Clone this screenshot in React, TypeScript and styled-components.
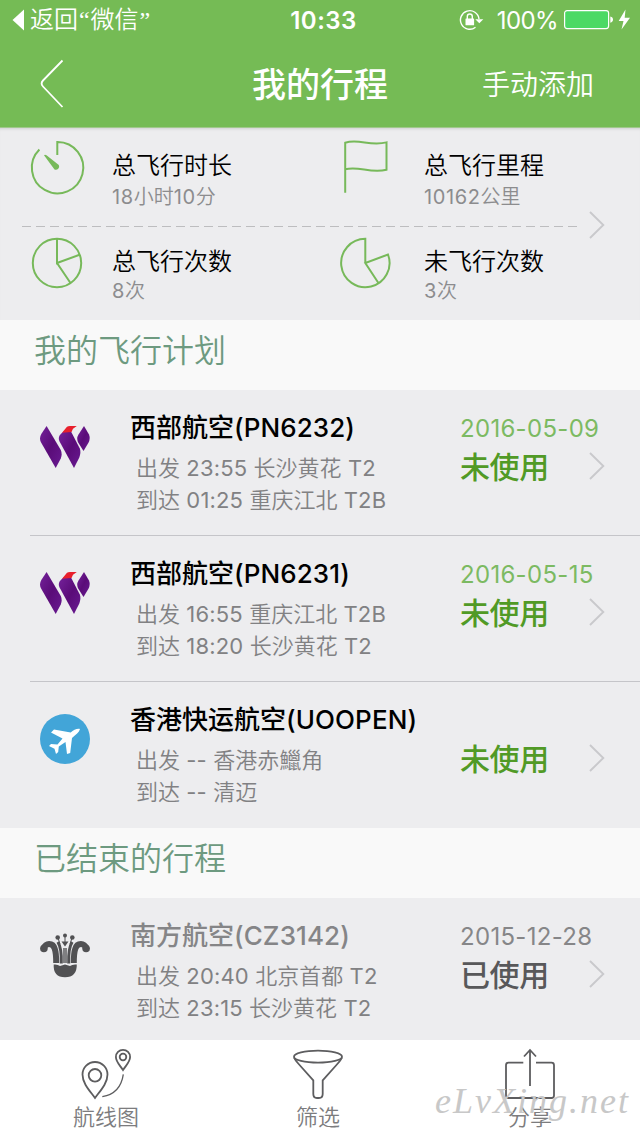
import React from 'react';
import styled, { createGlobalStyle } from 'styled-components';

const GlobalStyle = createGlobalStyle`
  *, *::before, *::after { box-sizing: border-box; }
  body {
    margin: 0;
    background: #ededef;
    font-family: Inter, "Noto Sans CJK SC", sans-serif;
    font-weight: 350;
  }
`;

const Screen = styled.div`
  position: relative;
  display: flex;
  flex-direction: column;
  width: 640px;
  height: 1136px;
  overflow: hidden;
  background: #ededef;
`;

/* ---------- text helpers ---------- */

const Latin = styled.span<{ $gap: number; $weight: number }>`
  font-weight: ${(p) => p.$weight};
  letter-spacing: ${(p) => p.$gap}px;
`;

function Mixed({ text, gap = 0, weight = 400 }: { text: string; gap?: number; weight?: number }) {
  const parts = text.match(/[\x00-\x7f]+|[^\x00-\x7f]+/g) ?? [];
  return (
    <>
      {parts.map((part, i) =>
        part.charCodeAt(0) < 128 ? (
          <Latin key={i} $gap={gap} $weight={weight}>{part}</Latin>
        ) : (
          <span key={i}>{part}</span>
        ),
      )}
    </>
  );
}

/* ---------- header ---------- */

const Header = styled.header`
  flex: none;
  height: 128px;
  background: #75bb55;
  color: #fff;
  border-bottom: 1px solid #a0c88c;
`;

const StatusBar = styled.div`
  display: grid;
  grid-template-columns: 1fr auto 1fr;
  align-items: center;
  height: 40px;
  padding: 0 8px 0 12px;
`;

const BackToApp = styled.div`
  display: flex;
  align-items: center;
  gap: 6px;
  font-size: 24px;
  line-height: 40px;
`;

const Quote = styled.span`
  display: inline-block;
  width: 12.5px;
  font-family: "Liberation Serif", serif;
  line-height: 30px;
  text-align: center;
`;

const Clock = styled.div`
  font-size: 24px;
  font-weight: 600;
  letter-spacing: 0.5px;
  padding: 1px 0 0 3px;
`;

const StatusIcons = styled.div`
  display: flex;
  align-items: center;
  justify-content: flex-end;
  font-size: 24px;
  font-weight: 400;
`;

const Percent = styled.span`
  margin: 1px 6px 0 13px;
  letter-spacing: -0.6px;
`;

const NavBar = styled.div`
  display: grid;
  grid-template-columns: 1fr auto 1fr;
  align-items: center;
  height: 88px;
  padding: 0 39px;
`;

const NavTitle = styled.h1`
  margin: 0;
  padding-top: 2px;
  font-size: 34px;
  line-height: 48px;
  font-weight: 500;
`;

const NavAction = styled.div`
  justify-self: end;
  margin-right: 7px;
  padding-top: 2px;
  font-size: 28px;
  line-height: 48px;
`;

/* ---------- statistics ---------- */

const Stats = styled.section`
  display: flex;
  flex: none;
  align-items: center;
  height: 192px;
  box-shadow: inset 0 3px 3px -2px #cfcfd1;
`;

const StatRows = styled.div`
  width: 578px;
  height: 192px;
`;

const StatRow = styled.div<{ $height: number; $top: number }>`
  display: grid;
  grid-template-columns: 312px 266px;
  height: ${(p) => p.$height}px;
  padding-top: ${(p) => p.$top}px;
`;

const StatCell = styled.div`
  display: grid;
  grid-template-columns: 84px 1fr;
  padding-left: 28px;
  align-items: start;
`;

const StatTitle = styled.div`
  font-size: 24px;
  line-height: 30px;
  color: #000;
`;

const StatValue = styled.div<{ $gap: number }>`
  margin-top: ${(p) => p.$gap}px;
  font-size: 20px;
  line-height: 28px;
  color: #8c8c8e;
`;

const Dashes = styled.div`
  height: 1px;
  margin-left: 22px;
  background: repeating-linear-gradient(90deg, #bdbdbf 0 9px, transparent 9px 14px);
`;

const ChevronSlot = styled.div<{ $top?: number }>`
  padding: ${(p) => p.$top ?? 2}px 0 0 11px;
  line-height: 0;
`;

/* ---------- flights ---------- */

const SectionTitle = styled.h2`
  flex: none;
  height: 70px;
  margin: 0;
  padding: 6px 0 0 34px;
  background: #f9f9f9;
  color: #6d9a80;
  font-size: 32px;
  line-height: 50px;
  font-weight: 350;
`;

const Flight = styled.article<{ $height: number; $divided: boolean }>`
  position: relative;
  display: grid;
  flex: none;
  grid-template-columns: 130px 330px 118px 1fr;
  height: ${(p) => p.$height}px;
  padding-top: 22px;
  &::after {
    content: "";
    display: ${(p) => (p.$divided ? 'block' : 'none')};
    position: absolute;
    left: 30px;
    right: 0;
    bottom: 0;
    height: 1px;
    background: #c5c5c9;
  }
`;

const Logo = styled.div`
  padding: 10px 0 0 40px;
  line-height: 0;
`;

const Name = styled.div<{ $past: boolean }>`
  margin-bottom: 8px;
  font-size: 26px;
  line-height: 32px;
  font-weight: 500;
  white-space: nowrap;
  color: ${(p) => (p.$past ? '#858587' : '#000')};
`;

const Leg = styled.div`
  padding-left: 6px;
  font-size: 22px;
  line-height: 32px;
  white-space: nowrap;
  color: #818183;
`;

const FlightDate = styled.div<{ $past: boolean }>`
  height: 33px;
  padding-top: 1px;
  margin-bottom: 2px;
  font-size: 24px;
  line-height: 32px;
  font-weight: 400;
  letter-spacing: 0.3px;
  white-space: nowrap;
  color: ${(p) => (p.$past ? '#868688' : '#7cba62')};
`;

const State = styled.div<{ $past: boolean }>`
  font-size: 30px;
  line-height: 40px;
  font-weight: 500;
  letter-spacing: -0.4px;
  color: ${(p) => (p.$past ? '#58585a' : '#519a26')};
`;

/* ---------- tab bar ---------- */

const TabBar = styled.nav`
  display: grid;
  flex: none;
  grid-template-columns: repeat(3, 212px);
  height: 96px;
  background: #fff;
`;

const Tab = styled.div`
  display: flex;
  flex-direction: column;
  align-items: center;
  padding-top: 8px;
  font-size: 22px;
  line-height: 32px;
  color: #7c7c7e;
`;

const Watermark = styled.div`
  position: absolute;
  left: 435px;
  top: 1079px;
  font-family: "Liberation Serif", serif;
  font-style: italic;
  font-size: 36px;
  font-weight: 400;
  line-height: 44px;
  letter-spacing: 2px;
  color: #c8c8c8;
  white-space: nowrap;
`;

/* ---------- icons ---------- */

const Chevron = () => (
  <svg width="17" height="28" viewBox="0 0 17 28" fill="none" stroke="#c9c9cc" strokeWidth="1.9">
    <path d="M1 1 14.3 14 1 27" />
  </svg>
);

const BackIcon = () => (
  <svg width="26" height="50" viewBox="0 0 26 50" fill="none" stroke="#fff" strokeWidth="1.8">
    <path d="M23.5 1.5 4 21.500Q1.200 24.500 4 27.500L23.500 48" />
  </svg>
);

const RotationLock = () => (
  <svg width="25" height="22" viewBox="0 0 25 22" fill="none" stroke="#fff" strokeWidth="1.4">
    <path d="M20 10A9.300 9.300 0 1 0 16.500 18.300" />
    <path d="M16.300 10.200H24.300L20.300 14.200Z" fill="#fff" stroke="none" />
    <rect x="6.500" y="9.500" width="8.600" height="6.800" rx="0.600" fill="#fff" stroke="none" />
    <path d="M8.300 10V7.500a2.500 2.500 0 0 1 5 0V10" />
  </svg>
);

const Battery = () => (
  <svg width="68" height="22" viewBox="0 0 68 22">
    <rect x="0.600" y="1.600" width="44" height="18" rx="2.500" fill="#4cd964" stroke="#fff" strokeWidth="1.200" />
    <path d="M46.300 7.500Q49 8 49 10.600T46.300 13.700Z" fill="#fff" />
    <path d="M61.500 0.500 54.700 12H59.500L57.500 20.500 66 8.700H60.700Z" fill="#fff" />
  </svg>
);

const StatIcon = styled.svg`
  display: block;
  overflow: visible;
  fill: none;
  stroke: #77b95a;
  stroke-width: 2;
`;

const TimerIcon = () => (
  <StatIcon width="60" height="54">
    <path d="M29.300 4V-9A25.700 25.700 0 1 1 11.400 -1.500" />
    <path d="M16 4.200 Q17 3.300 18.500 4.300L30.800 14A3.300 3.300 0 0 1 26.500 18.500Z" fill="#77b95a" stroke="none" />
  </StatIcon>
);

const FlagIcon = () => (
  <StatIcon width="60" height="54">
    <path d="M5.200 41.700V-8.300C19 -12.500 30 -4.500 46.500 -8.600V18.800C30 23 19 14.500 5.200 18.300" />
  </StatIcon>
);

const PieIcon = () => (
  <StatIcon width="60" height="54">
    <circle cx="29" cy="16" r="24.200" />
    <path d="M29 -8.200V16L51.500 7.800M29 16 42.500 36" />
  </StatIcon>
);

const OpenPieIcon = () => (
  <StatIcon width="60" height="54">
    <path d="M25.300 16V-8.200A24.200 24.200 0 1 0 48 7.500L25.300 16 38.600 36.200" />
  </StatIcon>
);

const WestAirLogo = () => (
  <svg width="50" height="50" viewBox="0 0 50 50">
    <defs>
      <linearGradient id="violet" x1="0" y1="0" x2="1" y2="1">
        <stop offset="0" stopColor="#74219a" />
        <stop offset="0.500" stopColor="#5a0c78" />
        <stop offset="1" stopColor="#691a92" />
      </linearGradient>
    </defs>
    <g fill="url(#violet)">
      <path d="M6.600 4 20.800 28Q22.500 32 20.800 36.500L15.700 46 0.800 20Q-1 16 1.300 12Z" />
      <path d="M23.500 9.500H31L39.800 26.500Q41.200 30 39.300 35.500L34 46 19.300 19Q17.800 15 20.800 12Z" />
      <path d="M44 4 49 12.500Q50.700 16.500 48.300 21L43.500 29 37.900 20Q36.300 16 38.500 12.500Z" />
    </g>
    <path d="M22 10.800 27 4.800Q28 4 30 4H36.800L33 6.800 31.500 10Z" fill="#e8202c" />
  </svg>
);

const PlaneLogo = () => (
  <svg width="50" height="50" viewBox="0 0 50 50">
    <circle cx="25" cy="25" r="25" fill="#42a5d8" />
    <path
      d="M40 15C37 14.300 33.500 16 30.700 18.400L14 15.500 11 18.500 22.500 24.500 17.500 30.500 11 30 9 32 14.500 34.800 16 40 18.200 38 18.800 32.500 25.500 28 27 40 30.200 39 32 24C36 20.500 39 18.500 40 15Z"
      fill="#fff"
    />
  </svg>
);

const SouthernLogo = () => (
  <svg width="50" height="50" viewBox="0 0 50 50">
    <g fill="none" stroke="#515153">
      <path d="M3.900 18C5 13 13 12 14.800 19Q16.200 23 16.200 33" strokeWidth="6" />
      <path d="M46.100 18C45 13 37 12 35.200 19Q33.800 23 33.800 33" strokeWidth="6" />
      <path d="M17.800 12Q21.800 18 21.300 33.500M32.200 12Q28.200 18 28.700 33.500" strokeWidth="3" />
      <path d="M24 18V33M26 18V33" strokeWidth="1.400" />
      <path d="M18 8 20 14M32 8 30 14M25 6V13" strokeWidth="1" />
    </g>
    <g fill="#515153">
      <circle cx="3.900" cy="18.500" r="3.800" />
      <circle cx="46.100" cy="18.500" r="3.800" />
      <circle cx="17.700" cy="7.500" r="2.300" />
      <circle cx="25" cy="5.500" r="2" />
      <circle cx="32.300" cy="7.500" r="2.300" />
      <path d="M21.500 11.500H28.500L25 16.500Z" />
      <path d="M13.700 34.500Q17.500 34 20 36L25 34.500 30 36Q32.500 34 36.800 34.500Q37 47.300 25 47.300T13.700 34.500Z" />
    </g>
  </svg>
);

const TabIcon = styled.svg`
  display: block;
  margin-bottom: 1px;
  fill: none;
  stroke: #5d5d5f;
  stroke-width: 1.8;
`;

const RouteIcon = () => (
  <TabIcon width="60" height="52">
    <path d="M19 50C14 43 6.500 35.500 6.500 26.500A12.500 12.500 0 0 1 31.500 26.500C31.500 35.500 24 43 19 50Z" />
    <circle cx="19" cy="27.300" r="6.300" />
    <path d="M47 22C44.500 18 39.900 14 39.900 9A7.100 7.100 0 0 1 54.100 9C54.100 14 49.500 18 47 22Z" />
    <circle cx="47" cy="9" r="3.300" />
    <path d="M47.300 26.300Q44.500 45.500 26.300 48.700" strokeWidth="1.300" />
  </TabIcon>
);

const FunnelIcon = () => (
  <TabIcon width="60" height="52">
    <ellipse cx="30" cy="8.700" rx="24" ry="6" />
    <path d="M6 9.500Q7 12 12 17.500L25.300 32.300V46Q25.300 50 29 50H31Q34.700 50 34.700 46V32.300L48 17.500Q53 12 54 9.500" />
  </TabIcon>
);

const ShareIcon = () => (
  <TabIcon width="60" height="52">
    <path d="M23.300 14.700H8.500Q6 14.700 6 17.200V47.500Q6 50 8.500 50H51.500Q54 50 54 47.500V17.200Q54 14.700 51.500 14.700H36" />
    <path d="M30 38V2M24 8.500 30 2 36 8.500" />
  </TabIcon>
);

/* ---------- data ---------- */

interface Trip {
  name: string;
  from: string;
  to: string;
  date?: string;
  state: string;
  past?: boolean;
  logo: React.ReactNode;
}

const planned: Trip[] = [
  { name: '西部航空(PN6232)', from: '出发 23:55 长沙黄花 T2', to: '到达 01:25 重庆江北 T2B', date: '2016-05-09', state: '未使用', logo: <WestAirLogo /> },
  { name: '西部航空(PN6231)', from: '出发 16:55 重庆江北 T2B', to: '到达 18:20 长沙黄花 T2', date: '2016-05-15', state: '未使用', logo: <WestAirLogo /> },
  { name: '香港快运航空(UOOPEN)', from: '出发 -- 香港赤鱲角', to: '到达 -- 清迈', state: '未使用', logo: <PlaneLogo /> },
];

const finished: Trip[] = [
  { name: '南方航空(CZ3142)', from: '出发 20:40 北京首都 T2', to: '到达 23:15 长沙黄花 T2', date: '2015-12-28', state: '已使用', past: true, logo: <SouthernLogo /> },
];

function FlightRow({ trip, height, divided }: { trip: Trip; height: number; divided: boolean }) {
  const past = !!trip.past;
  return (
    <Flight $height={height} $divided={divided}>
      <Logo>{trip.logo}</Logo>
      <div>
        <Name $past={past}><Mixed text={trip.name} gap={0.1} weight={500} /></Name>
        <Leg><Mixed text={trip.from} gap={0.15} /></Leg>
        <Leg><Mixed text={trip.to} gap={0.15} /></Leg>
      </div>
      <div>
        <FlightDate $past={past}>{trip.date}</FlightDate>
        <State $past={past}>{trip.state}</State>
      </div>
      <ChevronSlot $top={40}><Chevron /></ChevronSlot>
    </Flight>
  );
}

function Stat({ icon, title, value, gap }: { icon: React.ReactNode; title: string; value: string; gap: number }) {
  return (
    <StatCell>
      {icon}
      <div>
        <StatTitle>{title}</StatTitle>
        <StatValue $gap={gap}><Mixed text={value} gap={0.6} /></StatValue>
      </div>
    </StatCell>
  );
}

export default function App() {
  return (
    <Screen>
      <GlobalStyle />
      <Header>
        <StatusBar>
          <BackToApp>
            <svg width="12" height="22" viewBox="0 0 12 22"><path d="M12 0.500V21.500L0.500 11Z" fill="#fff" /></svg>
            <span>返回<Quote>“</Quote>微信<Quote>”</Quote></span>
          </BackToApp>
          <Clock>10:33</Clock>
          <StatusIcons>
            <RotationLock />
            <Percent>100%</Percent>
            <Battery />
          </StatusIcons>
        </StatusBar>
        <NavBar>
          <BackIcon />
          <NavTitle>我的行程</NavTitle>
          <NavAction>手动添加</NavAction>
        </NavBar>
      </Header>

      <Stats>
        <StatRows>
          <StatRow $height={98} $top={23}>
            <Stat icon={<TimerIcon />} title="总飞行时长" value="18小时10分" gap={2} />
            <Stat icon={<FlagIcon />} title="总飞行里程" value="10162公里" gap={2} />
          </StatRow>
          <Dashes />
          <StatRow $height={93} $top={20}>
            <Stat icon={<PieIcon />} title="总飞行次数" value="8次" gap={0} />
            <Stat icon={<OpenPieIcon />} title="未飞行次数" value="3次" gap={0} />
          </StatRow>
        </StatRows>
        <ChevronSlot><Chevron /></ChevronSlot>
      </Stats>

      <SectionTitle>我的飞行计划</SectionTitle>
      {planned.map((trip, i) => (
        <FlightRow key={trip.name} trip={trip} height={146} divided={i < planned.length - 1} />
      ))}

      <SectionTitle>已结束的行程</SectionTitle>
      {finished.map((trip) => (
        <FlightRow key={trip.name} trip={trip} height={142} divided={false} />
      ))}

      <TabBar>
        <Tab><RouteIcon />航线图</Tab>
        <Tab><FunnelIcon />筛选</Tab>
        <Tab><ShareIcon />分享</Tab>
      </TabBar>
      <Watermark>eLvXing.net</Watermark>
    </Screen>
  );
}
